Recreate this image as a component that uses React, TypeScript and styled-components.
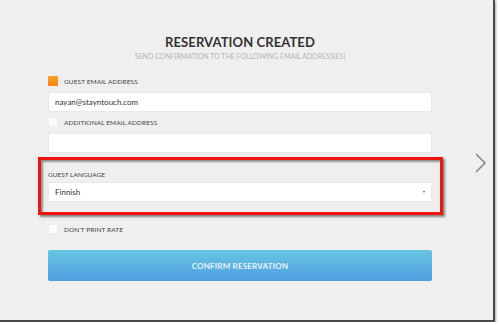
import styled, { createGlobalStyle } from "styled-components";

const GlobalStyle = createGlobalStyle`
  body {
    margin: 0;
    background: #ffffff;
    font-family: Lato, "Open Sans", sans-serif;
  }
`;

function Checkbox({ checked }: { checked?: boolean }) {
  return <Box $checked={checked} />;
}

export default function App() {
  return (
    <>
      <GlobalStyle />
      <Frame>
        <Form>
          <Title>RESERVATION CREATED</Title>
          <Subtitle>SEND CONFIRMATION TO THE FOLLOWING EMAIL ADDRESS(ES)</Subtitle>

          <CheckRow $top={15}>
            <Checkbox checked />
            <Label>GUEST EMAIL ADDRESS</Label>
          </CheckRow>
          <Input>nayan@stayntouch.com</Input>

          <CheckRow $top={5}>
            <Checkbox />
            <Label>ADDITIONAL EMAIL ADDRESS</Label>
          </CheckRow>
          <Input />

          <Highlight>
            <FieldLabel>GUEST LANGUAGE</FieldLabel>
            <Select>
              Finnish
              <Caret />
            </Select>
          </Highlight>

          <CheckRow $top={9}>
            <Checkbox />
            <Label>DON'T PRINT RATE</Label>
          </CheckRow>

          <ConfirmButton>CONFIRM RESERVATION</ConfirmButton>
        </Form>

        <NextArrow>
          <svg width="14" height="22" viewBox="0 0 14 22">
            <path d="M2 2 L11 11 L2 20" fill="none" stroke="#8a8a8a" strokeWidth="1.6" />
          </svg>
        </NextArrow>
      </Frame>
    </>
  );
}

const Frame = styled.div`
  width: 493px;
  height: 320px;
  background: #efefef;
  border-right: 2px solid #4a4a4a;
  border-bottom: 2px solid #4a4a4a;
  box-shadow: 1px 1px 2px rgba(0, 0, 0, 0.35);
  display: flex;
  align-items: flex-start;
`;

const Form = styled.div`
  width: 384px;
  margin-left: 48px;
  padding-top: 35px;
  display: flex;
  flex-direction: column;
`;

const Title = styled.div`
  text-align: center;
  font-size: 13px;
  line-height: 14px;
  font-weight: 700;
  color: #333333;
  letter-spacing: 0.1px;
`;

const Subtitle = styled.div`
  margin-top: 2px;
  text-align: center;
  font-size: 7px;
  line-height: 10px;
  color: #b5b5b5;
`;

const CheckRow = styled.div<{ $top: number }>`
  margin-top: ${({ $top }) => $top}px;
  height: 10px;
  display: flex;
  align-items: center;
  gap: 6px;
`;

const Box = styled.span<{ $checked?: boolean }>`
  width: 10px;
  height: 10px;
  border-radius: 1px;
  background: ${({ $checked }) =>
    $checked ? "linear-gradient(#ffa126, #f5850c)" : "#fbfbfb"};
  box-shadow: ${({ $checked }) =>
    $checked ? "none" : "inset 0 0 0 1px #ececec"};
`;

const Label = styled.span`
  font-size: 6.5px;
  color: #444444;
  letter-spacing: 0.1px;
`;

const Input = styled.div`
  margin-top: 6px;
  height: 20px;
  box-sizing: border-box;
  padding-left: 6px;
  background: #ffffff;
  border: 1px solid #e8e8e8;
  display: flex;
  align-items: center;
  font-size: 8px;
  color: #333333;
`;

const Highlight = styled.div`
  margin: 4px -11px 0 -10px;
  padding: 11px 8px 10px 7px;
  border: 3px solid #f0140c;
  box-shadow: 2px 2px 2px rgba(0, 0, 0, 0.45), inset 2px 2px 2px rgba(0, 0, 0, 0.4);
  display: flex;
  flex-direction: column;
`;

const FieldLabel = styled.div`
  font-size: 6.5px;
  line-height: 8px;
  color: #444444;
`;

const Select = styled.div`
  margin-top: 3px;
  height: 20px;
  box-sizing: border-box;
  padding: 0 6px;
  background: #ffffff;
  border: 1px solid #e8e8e8;
  display: flex;
  align-items: center;
  justify-content: space-between;
  font-size: 8px;
  color: #333333;
`;

const Caret = styled.span`
  width: 0;
  height: 0;
  border-left: 1.5px solid transparent;
  border-right: 1.5px solid transparent;
  border-top: 2px solid #555555;
`;

const ConfirmButton = styled.div`
  margin-top: 16px;
  height: 31px;
  border-radius: 2px;
  background: linear-gradient(#67c7e2, #509de0);
  display: flex;
  align-items: center;
  justify-content: center;
  font-size: 8px;
  font-weight: 700;
  color: #e6f3fa;
  letter-spacing: 0.2px;
`;

const NextArrow = styled.div`
  margin-left: 42px;
  margin-top: 152px;
  display: flex;
`;
